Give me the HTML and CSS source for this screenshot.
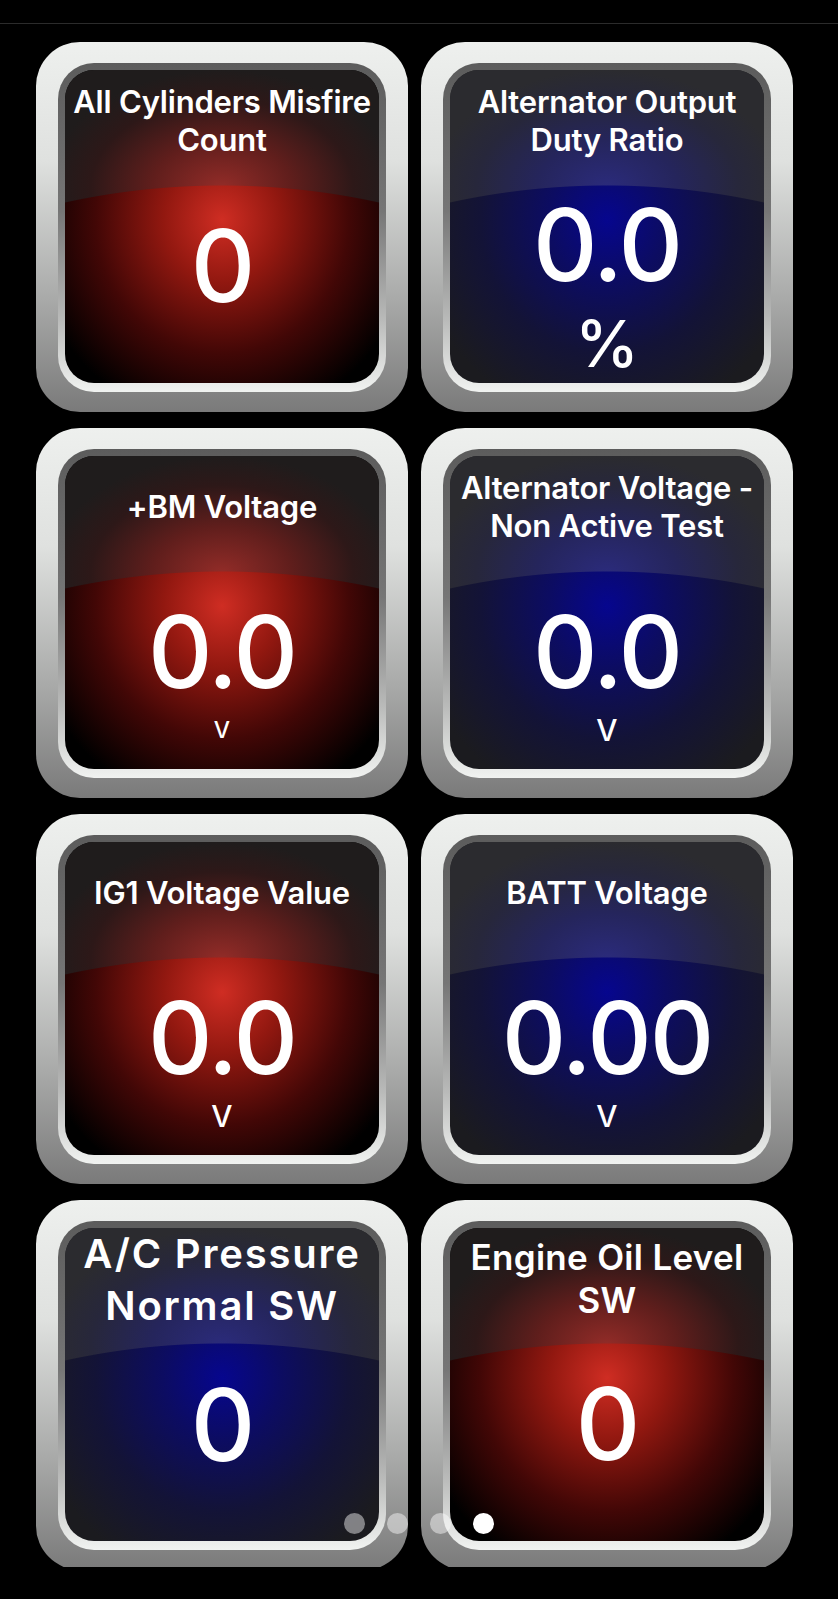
FILE: index.html
```html
<!DOCTYPE html>
<html lang="en">
<head>
    <meta charset="UTF-8">
    <meta name="viewport" content="width=device-width, initial-scale=1.0">
    <title>Live Data</title>
    <link rel="stylesheet" href="styles.css">
</head>
<body>

<div class="status-bar"></div>

<div class="pages">
    <div class="grid">

        <div class="gauge">
            <div class="rim">
                <div class="screen red">
                    <div class="title">All Cylinders Misfire<br>Count</div>
                    <div class="reading">
                        <div class="value">0</div>
                        <div class="unit"></div>
                    </div>
                </div>
            </div>
        </div>

        <div class="gauge">
            <div class="rim">
                <div class="screen blue">
                    <div class="title">Alternator Output<br>Duty Ratio</div>
                    <div class="reading">
                        <div class="value">0.0</div>
                        <div class="unit unit-large">%</div>
                    </div>
                </div>
            </div>
        </div>

        <div class="gauge">
            <div class="rim">
                <div class="screen red">
                    <div class="title">+BM Voltage</div>
                    <div class="reading">
                        <div class="value">0.0</div>
                        <div class="unit unit-small">V</div>
                    </div>
                </div>
            </div>
        </div>

        <div class="gauge">
            <div class="rim">
                <div class="screen blue">
                    <div class="title">Alternator Voltage -<br>Non Active Test</div>
                    <div class="reading">
                        <div class="value">0.0</div>
                        <div class="unit">V</div>
                    </div>
                </div>
            </div>
        </div>

        <div class="gauge">
            <div class="rim">
                <div class="screen red">
                    <div class="title">IG1 Voltage Value</div>
                    <div class="reading">
                        <div class="value">0.0</div>
                        <div class="unit">V</div>
                    </div>
                </div>
            </div>
        </div>

        <div class="gauge">
            <div class="rim">
                <div class="screen blue">
                    <div class="title">BATT Voltage</div>
                    <div class="reading">
                        <div class="value">0.00</div>
                        <div class="unit">V</div>
                    </div>
                </div>
            </div>
        </div>

        <div class="gauge">
            <div class="rim">
                <div class="screen blue">
                    <div class="title title-large">A/C Pressure<br>Normal SW</div>
                    <div class="reading">
                        <div class="value">0</div>
                        <div class="unit"></div>
                    </div>
                </div>
            </div>
        </div>

        <div class="gauge">
            <div class="rim">
                <div class="screen red">
                    <div class="title title-medium">Engine Oil Level<br>SW</div>
                    <div class="reading">
                        <div class="value">0</div>
                        <div class="unit"></div>
                    </div>
                </div>
            </div>
        </div>

    </div>

    <!-- Page indicator -->
    <div class="dots">
        <span class="dot"></span>
        <span class="dot"></span>
        <span class="dot"></span>
        <span class="dot active"></span>
    </div>
</div>

</body>
</html>
```

FILE: styles.css
```css
* {
    box-sizing: border-box;
    margin: 0;
    padding: 0;
}

body {
    font-family: 'Inter', 'Noto Sans', sans-serif;
    background-color: #000;
    color: #fff;
    width: 838px;
    height: 1599px;
    overflow: hidden;
}

.status-bar {
    height: 24px;
    border-bottom: 1px solid #2b2b2b;
}

.pages {
    position: relative;
    height: 1543px;
    overflow: hidden;
}

.grid {
    display: grid;
    grid-template-columns: 372px 372px;
    grid-auto-rows: 370px;
    column-gap: 13px;
    row-gap: 16px;
    padding: 18px 0 0 36px;
}

/* metal bezel */
.gauge {
    border-radius: 44px;
    padding: 21px 22px 20px;
    background: linear-gradient(#eef0ee 0%, #dfe1df 32%, #a8a9a8 70%, #7a7a7a 100%);
}

.rim {
    height: 100%;
    border-radius: 36px;
    padding: 7px 7px 9px;
    background: linear-gradient(#5c5c5c 0%, #767676 45%, #b9bab9 78%, #f1f3f1 100%);
}

.screen {
    position: relative;
    height: 100%;
    border-radius: 29px;
    overflow: hidden;
    display: flex;
    flex-direction: column;
    text-align: center;
}

/* glossy upper half, cut by a wide arc */
.screen::before {
    content: '';
    position: absolute;
    inset: 0;
    -webkit-mask-image: radial-gradient(circle 733px at 50% 848px, transparent 732px, #000 733px);
    mask-image: radial-gradient(circle 733px at 50% 848px, transparent 732px, #000 733px);
}

.screen.red {
    background: radial-gradient(ellipse 195px 205px at 50% 150px, #cf2d23 0%, #921810 30%, #420706 65%, #000 100%);
}

.screen.red::before {
    background: radial-gradient(ellipse 175px 118px at 50% 118px, #932c28 0%, #601e1c 40%, #2d1818 75%, #1f1c1c 100%);
}

.screen.blue {
    background: radial-gradient(ellipse 195px 205px at 50% 150px, #06068e 0%, #0c0c62 30%, #131337 65%, #1b1b1f 100%);
}

.screen.blue::before {
    background: radial-gradient(ellipse 175px 118px at 50% 118px, #2b2b7c 0%, #25255c 40%, #27273b 75%, #2b2b2f 100%);
}

.title,
.reading {
    position: relative;
}

.title {
    min-height: 102px;
    display: flex;
    align-items: center;
    justify-content: center;
    font-size: 31px;
    line-height: 38px;
    font-weight: 600;
    letter-spacing: -0.2px;
}

.title-large {
    font-size: 40px;
    line-height: 52px;
    letter-spacing: 1.8px;
}

.title-medium {
    font-size: 35px;
    line-height: 43px;
    letter-spacing: 0.3px;
}

.reading {
    flex: 1;
    display: flex;
    flex-direction: column;
    justify-content: center;
    padding-top: 12px;
}

.value {
    font-size: 100px;
    line-height: 121px;
    font-weight: 500;
    letter-spacing: -2px;
}

.unit {
    min-height: 37px;
    font-size: 30px;
    line-height: 37px;
    font-weight: 500;
}

.unit-small {
    font-size: 23px;
}

.unit-large {
    font-size: 64px;
    line-height: 78px;
}

/* page indicator */
.dots {
    position: absolute;
    left: 0;
    right: 0;
    bottom: 33px;
    display: flex;
    justify-content: center;
    gap: 22px;
}

.dot {
    width: 21px;
    height: 21px;
    border-radius: 50%;
    background-color: rgba(255, 255, 255, 0.45);
}

.dot.active {
    background-color: #fff;
}
```
